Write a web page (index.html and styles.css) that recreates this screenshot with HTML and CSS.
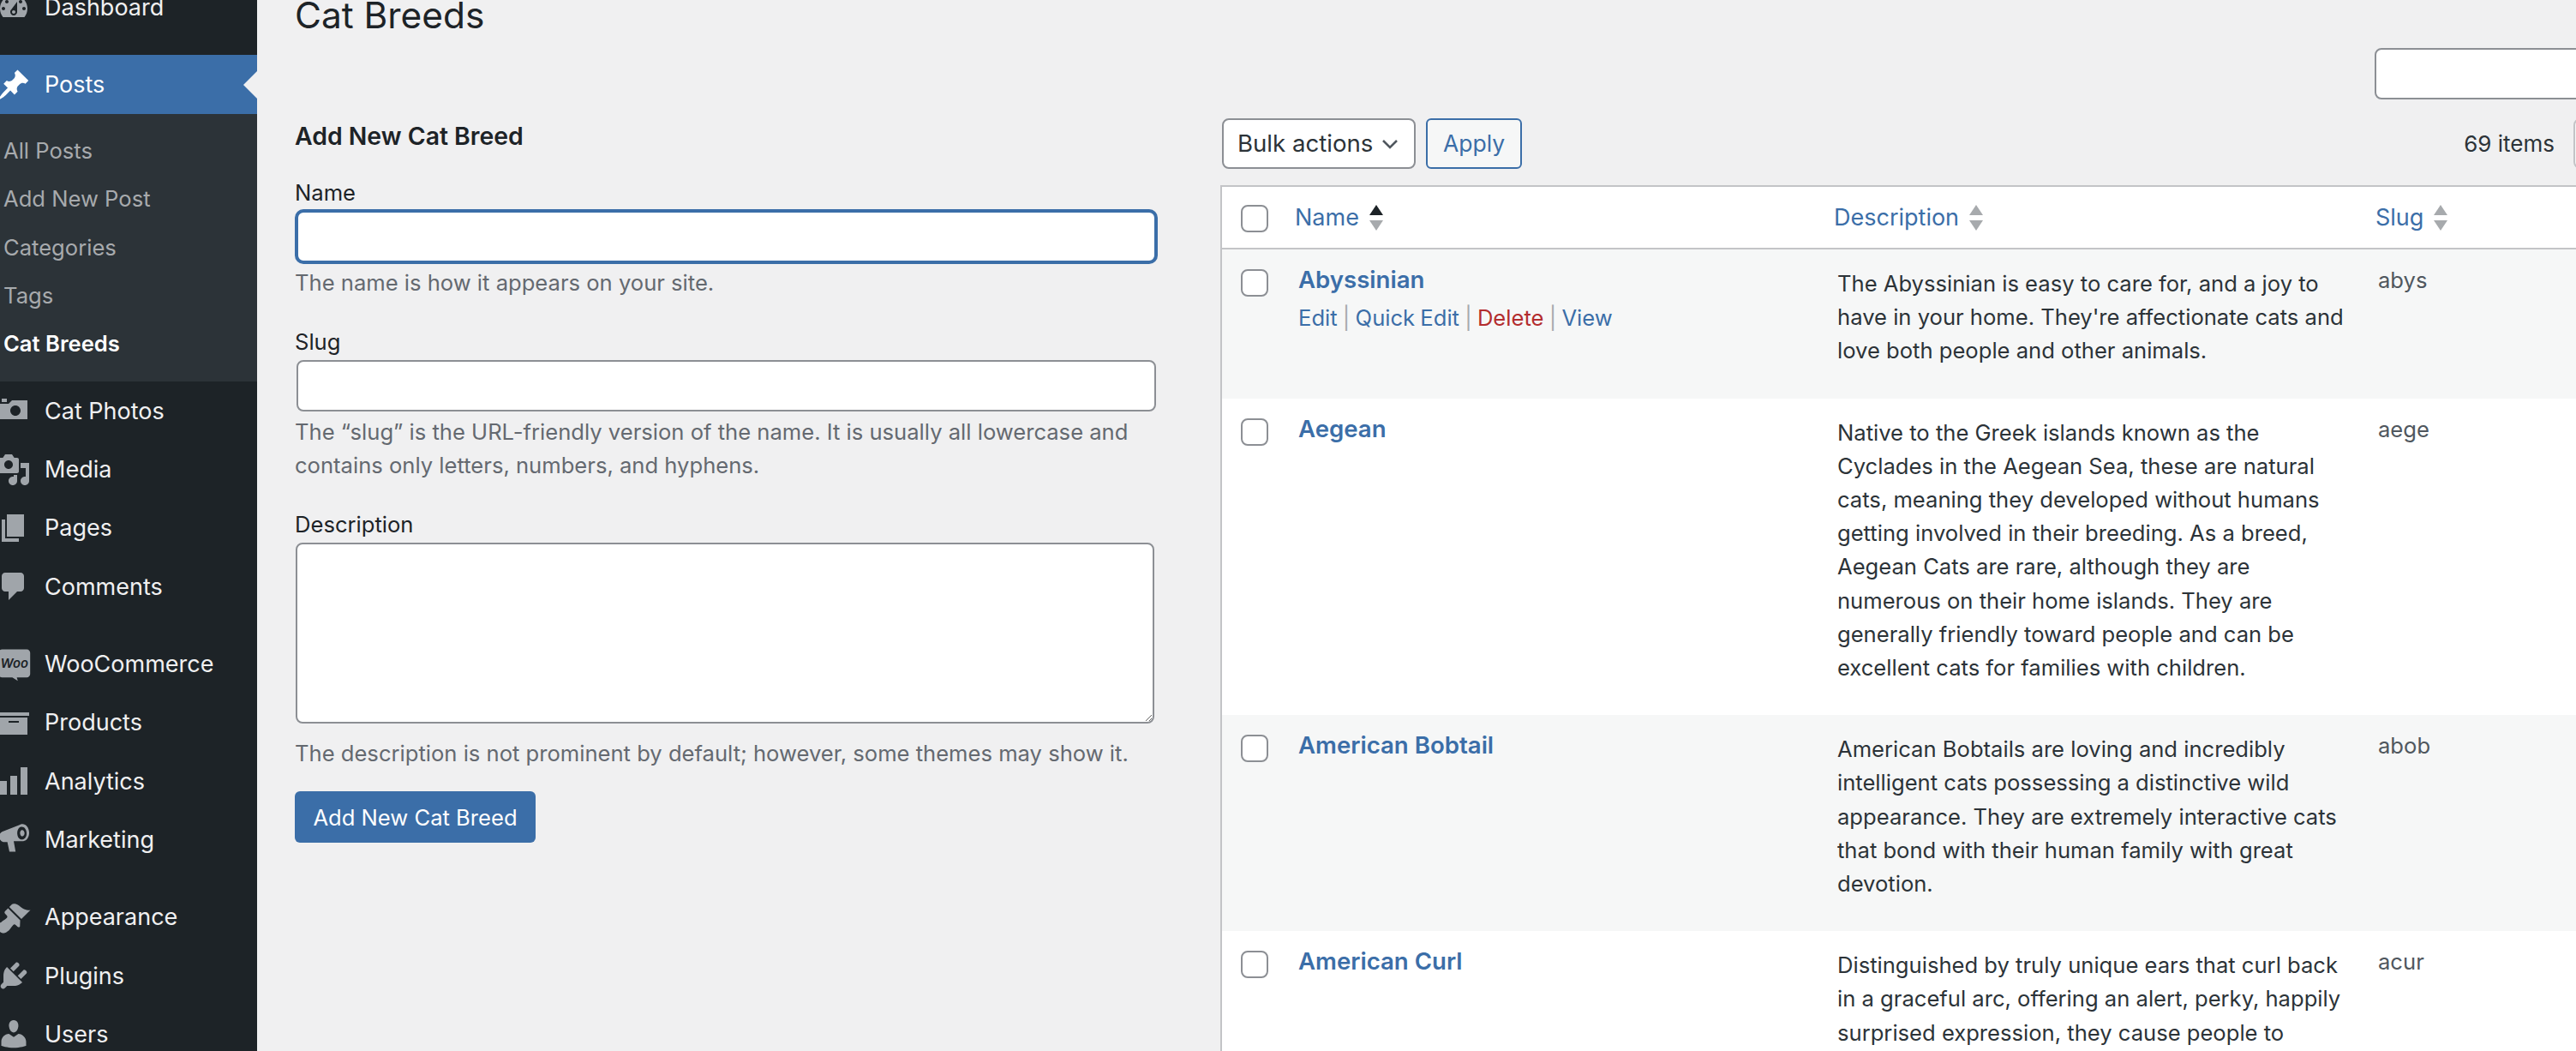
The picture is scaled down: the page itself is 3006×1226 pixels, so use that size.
FILE: index.html
```html
<!DOCTYPE html>
<html lang="en">
<head>
  <meta charset="UTF-8" />
  <title>Cat Breeds</title>
  <link rel="stylesheet" href="styles.css">
</head>
<body>
  <div class="page">
    <nav class="sidebar">
      <ul class="menu menu-first">
        <li class="item">
          <svg class="icon" viewBox="0 0 20 20"><path fill-rule="evenodd" d="M3.76 16h12.48c1.1-1.37 1.76-3.11 1.76-5 0-4.42-3.58-8-8-8s-8 3.58-8 8c0 1.89.66 3.63 1.76 5zM10 4c.55 0 1 .45 1 1s-.45 1-1 1-1-.45-1-1 .45-1 1-1zM6 6c.55 0 1 .45 1 1s-.45 1-1 1-1-.45-1-1 .45-1 1-1zm8 0c.55 0 1 .45 1 1s-.45 1-1 1-1-.45-1-1 .45-1 1-1zm-5.37 5.55L12 7v6c0 1.1-.9 2-2 2s-2-.9-2-2c0-.57.24-1.08.63-1.45zM4 10c.55 0 1 .45 1 1s-.45 1-1 1-1-.45-1-1 .45-1 1-1zm12 0c.55 0 1 .45 1 1s-.45 1-1 1-1-.45-1-1 .45-1 1-1zm-5 3c0-.55-.45-1-1-1s-1 .45-1 1 .45 1 1 1 1-.45 1-1z"/></svg>
          Dashboard
        </li>
      </ul>
      <div class="item item-current">
        <svg class="icon" viewBox="0 0 20 20"><path d="M10.44 3.02l1.82-1.82 6.36 6.35-1.83 1.82c-1.05-.68-2.48-.57-3.41.36l-.75.75c-.92.93-1.04 2.35-.35 3.41l-1.83 1.82-2.41-2.41-2.8 2.79c-.42.42-3.38 2.71-3.8 2.29s1.86-3.39 2.28-3.81l2.79-2.79L4.1 9.36l1.83-1.82c1.05.69 2.48.57 3.4-.36l.75-.75c.93-.92 1.05-2.35.36-3.41z"/></svg>
        Posts
        <span class="current-arrow"></span>
      </div>
      <ul class="submenu">
        <li>All Posts</li>
        <li>Add New Post</li>
        <li>Categories</li>
        <li>Tags</li>
        <li class="sub-current">Cat Breeds</li>
      </ul>
      <ul class="menu">
        <li class="item">
          <svg class="icon" viewBox="0 0 20 20"><path fill-rule="evenodd" d="M6 5V3H3v2h3zm12 10V4H9L7 6H2v9h16zm-7-8c1.66 0 3 1.34 3 3s-1.34 3-3 3-3-1.34-3-3 1.34-3 3-3z"/></svg>
          Cat Photos
        </li>
        <li class="item">
          <svg class="icon" viewBox="0 0 20 20"><path fill-rule="evenodd" d="M13 11V4c0-.55-.45-1-1-1h-1.67L9 1H5L3.67 3H2c-.55 0-1 .45-1 1v7c0 .55.45 1 1 1h10c.55 0 1-.45 1-1zM7 4.5c1.38 0 2.5 1.12 2.5 2.5S8.38 9.5 7 9.5 4.5 8.38 4.5 7 5.62 4.5 7 4.5zM14 6h5v10.5c0 1.38-1.12 2.5-2.5 2.5S14 17.88 14 16.5s1.12-2.5 2.5-2.5c.17 0 .34.02.5.05V9h-3V6zm-4 8.05V13h2v3.5c0 1.38-1.12 2.5-2.5 2.5S7 17.88 7 16.5 8.12 14 9.5 14c.17 0 .34.02.5.05z"/></svg>
          Media
        </li>
        <li class="item">
          <svg class="icon" viewBox="0 0 20 20"><path d="M6 15V2h10v13H6zm-1 1h8v2H3V5h2v11z"/></svg>
          Pages
        </li>
        <li class="item">
          <svg class="icon" viewBox="0 0 20 20"><path d="M5 2h9c1.1 0 2 .9 2 2v7c0 1.1-.9 2-2 2h-2l-5 5v-5H5c-1.1 0-2-.9-2-2V4c0-1.1.9-2 2-2z"/></svg>
          Comments
        </li>
        <li class="separator"></li>
        <li class="item">
          <svg class="icon" viewBox="0 0 20 20">
            <path d="M3.2 1.2h14.4c1.1 0 2 .9 2 2v12.4c0 1.1-.9 2-2 2h-5.8l.6 2-3.2-2H3.2c-1.1 0-2-.9-2-2V3.2c0-1.1.9-2 2-2z"/>
            <text class="woo-text" x="10.4" y="11.9">Woo</text>
          </svg>
          WooCommerce
        </li>
        <li class="item">
          <svg class="icon" viewBox="0 0 20 20"><path fill-rule="evenodd" d="M19 4v2H1V4h18zM2 7h16v10H2V7zm11 3V9H7v1h6z"/></svg>
          Products
        </li>
        <li class="item">
          <svg class="icon" viewBox="0 0 20 20"><path d="M18 18V2h-4v16h4zm-6 0V7H8v11h4zm-6 0v-8H2v8h4z"/></svg>
          Analytics
        </li>
        <li class="item">
          <svg class="icon" viewBox="0 0 20 20"><path fill-rule="evenodd" d="M14.2 1.3c2.5-.7 4.6 1.6 4.8 4.5.2 2.7-1.2 5.1-3.4 5.3H10l1.1 6.2H7.5L6.3 11.6H3.9C2.7 11.4 1.5 10 1.5 8.4c0-1.3.8-2.3 1.7-2.8l9.9-3.8c.4-.2.7-.4 1.1-.5zm.2 1.5c-1.6.3-2.5 2.2-2.3 4.2.2 2.1 1.5 3.5 3.100 3.1 1.6-.3 2.5-2.1 2.3-4-.2-2.1-1.5-3.6-3.1-3.3zM14.8 4.6c.8-.1 1.4.7 1.5 1.7.1 1-.4 1.9-1.1 2-.8.1-1.4-.7-1.5-1.7-.1-1 .4-1.9 1.1-2z"/></svg>
          Marketing
        </li>
        <li class="separator"></li>
        <li class="item">
          <svg class="icon" viewBox="0 0 20 20"><path d="M14.48 11.06L7.41 3.99l1.5-1.5c.5-.56 2.3-.47 3.51.32 1.21.8 1.43 1.28 2.91 2.1 1.18.64 2.45 1.26 4.45.85zm-.71.71L6.7 4.7 4.93 6.47c-.39.39-.39 1.02 0 1.41l1.06 1.06c.39.39.39 1.03 0 1.42-.6.6-1.43 1.11-2.21 1.69-.35.26-.7.53-1.01.84C1.43 13.23.18 14.93.18 15.9c0 1.44 2.5 3.57 4.2 3.4 1.04-.1 2.8-1.6 2.84-1.64.3-.3.57-.66.82-1.01.58-.78 1.09-1.61 1.69-2.21.39-.39 1.03-.39 1.42 0l1.06 1.06c.39.39 1.02.39 1.41 0z"/></svg>
          Appearance
        </li>
        <li class="item">
          <svg class="icon" viewBox="0 0 20 20"><path d="M13.11 4.36L9.87 7.6 8 5.73l3.24-3.24c.35-.34 1.05-.2 1.56.32.52.51.66 1.21.31 1.55zm-8 1.77l.91-1.12 9.01 9.01-1.19.84c-.71.71-2.63 1.16-3.82 1.16H6.14L4.9 17.26c-.59.59-1.54.59-2.12 0-.59-.58-.59-1.53 0-2.12l1.24-1.24v-3.88c0-1.13.4-3.19 1.09-3.89zm7.26 3.97l3.24-3.24c.34-.35 1.04-.21 1.55.31.52.51.66 1.21.31 1.55l-3.24 3.25z"/></svg>
          Plugins
        </li>
        <li class="item">
          <svg class="icon" viewBox="0 0 20 20"><path d="M10 9.25c-2.27 0-2.73-3.44-2.73-3.44C7 4.02 7.82 2 9.97 2c2.16 0 2.98 2.02 2.71 3.81 0 0-.41 3.44-2.68 3.44zm0 2.57L12.72 10c2.39 0 4.52 2.33 4.52 4.53v2.49s-3.65 1.13-7.24 1.13c-3.65 0-7.24-1.13-7.24-1.13v-2.49c0-2.25 1.94-4.48 4.47-4.48z"/></svg>
          Users
        </li>
      </ul>
    </nav>

    <main class="content">
      <h1>Cat Breeds</h1>
      <div class="search-row">
        <input class="search-input" type="search" />
      </div>
      <div class="columns">
        <form class="col-form">
          <h2>Add New Cat Breed</h2>
          <div class="field">
            <label for="tag-name">Name</label>
            <input class="text-input is-focused" type="text" id="tag-name" />
            <p class="hint">The name is how it appears on your site.</p>
          </div>
          <div class="field">
            <label for="tag-slug">Slug</label>
            <input class="text-input" type="text" id="tag-slug" />
            <p class="hint">The “slug” is the URL-friendly version of the name. It is usually all lowercase and contains only letters, numbers, and hyphens.</p>
          </div>
          <div class="field">
            <label for="tag-description">Description</label>
            <textarea id="tag-description"></textarea>
            <p class="hint hint-textarea">The description is not prominent by default; however, some themes may show it.</p>
          </div>
          <button type="button" class="btn-primary">Add New Cat Breed</button>
        </form>

        <div class="col-table">
          <div class="tablenav">
            <div class="bulk-select">
              Bulk actions
              <svg class="chevron" viewBox="0 0 20 12"><path d="M2 2l8 8 8-8" /></svg>
            </div>
            <button type="button" class="btn-apply">Apply</button>
            <div class="pager">
              <span>69 items</span>
              <input class="pager-input" type="text" />
            </div>
          </div>

          <table class="breeds">
            <colgroup>
              <col class="col-check" />
              <col class="col-name" />
              <col class="col-desc" />
              <col class="col-slug" />
            </colgroup>
            <thead>
              <tr>
                <th><input class="check" type="checkbox" /></th>
                <th>
                  <a class="sort-link">Name
                    <svg class="sort" viewBox="0 0 16 30"><polygon class="sort-on" points="8,0 16,12 0,12" /><polygon points="0,18 16,18 8,30" /></svg>
                  </a>
                </th>
                <th>
                  <a class="sort-link">Description
                    <svg class="sort" viewBox="0 0 16 30"><polygon points="8,0 16,12 0,12" /><polygon points="0,18 16,18 8,30" /></svg>
                  </a>
                </th>
                <th>
                  <a class="sort-link">Slug
                    <svg class="sort" viewBox="0 0 16 30"><polygon points="8,0 16,12 0,12" /><polygon points="0,18 16,18 8,30" /></svg>
                  </a>
                </th>
              </tr>
            </thead>
            <tbody>
              <tr>
                <td><input class="check" type="checkbox" /></td>
                <td>
                  <a class="breed-name">Abyssinian</a>
                  <div class="row-actions">
                    <a>Edit</a> <span class="sep">|</span> <a>Quick Edit</a> <span class="sep">|</span> <a class="delete">Delete</a> <span class="sep">|</span> <a>View</a>
                  </div>
                </td>
                <td class="desc">The Abyssinian is easy to care for, and a joy to have in your home. They're affectionate cats and love both people and other animals.</td>
                <td class="slug">abys</td>
              </tr>
              <tr>
                <td><input class="check" type="checkbox" /></td>
                <td><a class="breed-name">Aegean</a></td>
                <td class="desc">Native to the Greek islands known as the Cyclades in the Aegean Sea, these are natural cats, meaning they developed without humans getting involved in their breeding. As a breed, Aegean Cats are rare, although they are numerous on their home islands. They are generally friendly toward people and can be excellent cats for families with children.</td>
                <td class="slug">aege</td>
              </tr>
              <tr>
                <td><input class="check" type="checkbox" /></td>
                <td><a class="breed-name">American Bobtail</a></td>
                <td class="desc">American Bobtails are loving and incredibly intelligent cats possessing a distinctive wild appearance. They are extremely interactive cats that bond with their human family with great devotion.</td>
                <td class="slug">abob</td>
              </tr>
              <tr>
                <td><input class="check" type="checkbox" /></td>
                <td><a class="breed-name">American Curl</a></td>
                <td class="desc">Distinguished by truly unique ears that curl back in a graceful arc, offering an alert, perky, happily surprised expression, they cause people to</td>
                <td class="slug">acur</td>
              </tr>
            </tbody>
          </table>
        </div>
      </div>
    </main>
  </div>
</body>
</html>
```

FILE: styles.css
```css
html, body {
  margin: 0;
  height: 1226px;
  overflow: hidden;
}
body {
  font-family: Inter, "Noto Sans", sans-serif;
  font-size: 25.6px;
  line-height: 39px;
  color: #1d2327;
  background: #f0f0f1;
}
.page {
  display: flex;
  width: 3006px;
  height: 1226px;
  overflow: hidden;
}

/* sidebar */
.sidebar {
  flex: 0 0 300px;
  width: 300px;
  background: #1d2327;
  color: #f0f0f1;
  overflow: hidden;
}
.menu, .submenu {
  list-style: none;
  margin: 0;
  padding: 0;
}
.menu-first {
  margin-top: -26px;
  margin-bottom: 22px;
}
.item {
  display: flex;
  align-items: center;
  gap: 16px;
  height: 68.3px;
  font-size: 27px;
}
.icon {
  flex: 0 0 40px;
  width: 40px;
  height: 40px;
  margin-left: -4px;
  fill: #a0a5aa;
}
.woo-text {
  fill: #1d2327;
  font-size: 7.4px;
  font-style: italic;
  font-weight: 600;
  text-anchor: middle;
}
.separator {
  height: 22px;
}
.item-current {
  position: relative;
  height: 69px;
  background: #3b6ea8;
  color: #fff;
}
.item-current .icon {
  fill: #fff;
}
.current-arrow {
  position: absolute;
  right: 0;
  top: 19px;
  border: 16px solid transparent;
  border-left-width: 0;
  border-right-color: #f0f0f1;
}
.submenu {
  background: #2c3338;
  padding: 15px 0 16px;
  color: #a7aaad;
  font-size: 25.6px;
}
.submenu li {
  height: 56.2px;
  line-height: 56.2px;
  padding-left: 4px;
}
.sub-current {
  color: #fff;
  font-weight: 600;
}

/* main */
.content {
  flex: 1;
  min-width: 0;
  padding-left: 44px;
}
h1 {
  margin: -12px 0 0;
  font-size: 42.4px;
  line-height: 60px;
  font-weight: 400;
}
.search-row {
  margin-top: 8px;
  padding-left: 2427px;
  height: 60px;
}
input {
  box-sizing: border-box;
}
.search-input {
  display: block;
  width: 300px;
  height: 60px;
  border: 2px solid #8c8f94;
  border-radius: 8px;
  background: #fff;
}
.columns {
  display: flex;
  gap: 74px;
  margin-top: 22px;
}
.col-form {
  flex: 0 0 1006px;
  width: 1006px;
}
.col-table {
  flex: 0 0 1650px;
  width: 1650px;
}

/* form */
h2 {
  margin: 0 0 25px;
  font-size: 28.4px;
  line-height: 42px;
  font-weight: 600;
}
.field {
  margin-bottom: 30px;
}
label {
  display: block;
  margin-bottom: 2px;
}
.text-input {
  display: block;
  width: 1003px;
  height: 60px;
  margin-left: 2px;
  border: 2px solid #8c8f94;
  border-radius: 8px;
  background: #fff;
}
.is-focused {
  border-color: #3b6ea8;
  box-shadow: 0 0 0 2px #3b6ea8;
}
.hint {
  margin: 4px 0 0;
  color: #646970;
}
textarea {
  display: block;
  box-sizing: border-box;
  width: 1002px;
  height: 211px;
  margin-left: 1px;
  border: 2px solid #8c8f94;
  border-radius: 8px;
  background: #fff;
}
.hint-textarea {
  margin-top: 15px;
}
.btn-primary {
  display: block;
  margin-top: -5px;
  width: 281px;
  height: 60px;
  padding: 0;
  border: none;
  border-radius: 6px;
  background: #3b6ea8;
  color: #fff;
  font: inherit;
}

/* list table */
.tablenav {
  display: flex;
  align-items: center;
  gap: 12px;
  height: 59px;
  margin-bottom: 19px;
  padding-left: 2px;
}
.bulk-select {
  box-sizing: border-box;
  display: flex;
  align-items: center;
  justify-content: space-between;
  width: 226px;
  height: 59px;
  padding: 0 18px 0 16px;
  border: 2px solid #8c8f94;
  border-radius: 8px;
  background: #fff;
  color: #2c3338;
  font-size: 27.6px;
}
.chevron {
  width: 20px;
  height: 12px;
  fill: none;
  stroke: #50575e;
  stroke-width: 2.5;
}
.btn-apply {
  box-sizing: border-box;
  width: 112px;
  height: 59px;
  padding: 0;
  border: 2px solid #3b6ea8;
  border-radius: 6px;
  background: #f6f7f7;
  color: #3b6ea8;
  font: inherit;
  font-size: 26.5px;
}
.pager {
  display: flex;
  align-items: center;
  gap: 22px;
  margin-left: auto;
  color: #2c3338;
  font-size: 26px;
}
.pager-input {
  width: 71px;
  height: 59px;
  border: 2px solid #c3c4c7;
  border-radius: 8px;
  background: #f6f7f7;
}
.breeds {
  table-layout: fixed;
  width: 1650px;
  border-collapse: separate;
  border-spacing: 0;
  border-top: 2px solid #c3c4c7;
  border-left: 2px solid #c3c4c7;
  background: #fff;
}
.col-check { width: 73px; }
.col-name { width: 629px; }
.col-desc { width: 632px; }
.breeds th {
  height: 71px;
  padding: 0 0 0 12px;
  border-bottom: 2px solid #c3c4c7;
  text-align: left;
  font-weight: 400;
  font-size: 27px;
}
.breeds th:first-child,
.breeds td:first-child {
  padding-left: 22px;
}
.breeds th:first-child .check {
  margin-top: 2px;
}
.check {
  appearance: none;
  display: block;
  width: 32px;
  height: 32px;
  margin: 0;
  border: 2px solid #8c8f94;
  border-radius: 8px;
  background: #fff;
}
.sort-link {
  display: flex;
  align-items: center;
  gap: 12px;
  color: #3b6ea8;
}
.sort {
  width: 16px;
  height: 30px;
  fill: #a7aaad;
}
.sort-on {
  fill: #1d2327;
}
.breeds td {
  padding: 16px 0 0 16px;
  vertical-align: top;
}
.breeds td:first-child {
  padding-top: 23px;
}
.breeds tbody tr:nth-child(odd) {
  background: #f6f7f7;
}
.breeds td.desc {
  padding: 20px 16px 36px 16px;
  line-height: 39.2px;
  color: #2c3338;
}
.breeds td.slug {
  padding-left: 15px;
  color: #50575e;
}
.breed-name {
  color: #3b6ea8;
  font-weight: 600;
  font-size: 27.6px;
}
.row-actions {
  margin-top: 5px;
  color: #3b6ea8;
  word-spacing: -1px;
}
.sep {
  color: #a7aaad;
}
.delete {
  color: #b32d2e;
}
```
